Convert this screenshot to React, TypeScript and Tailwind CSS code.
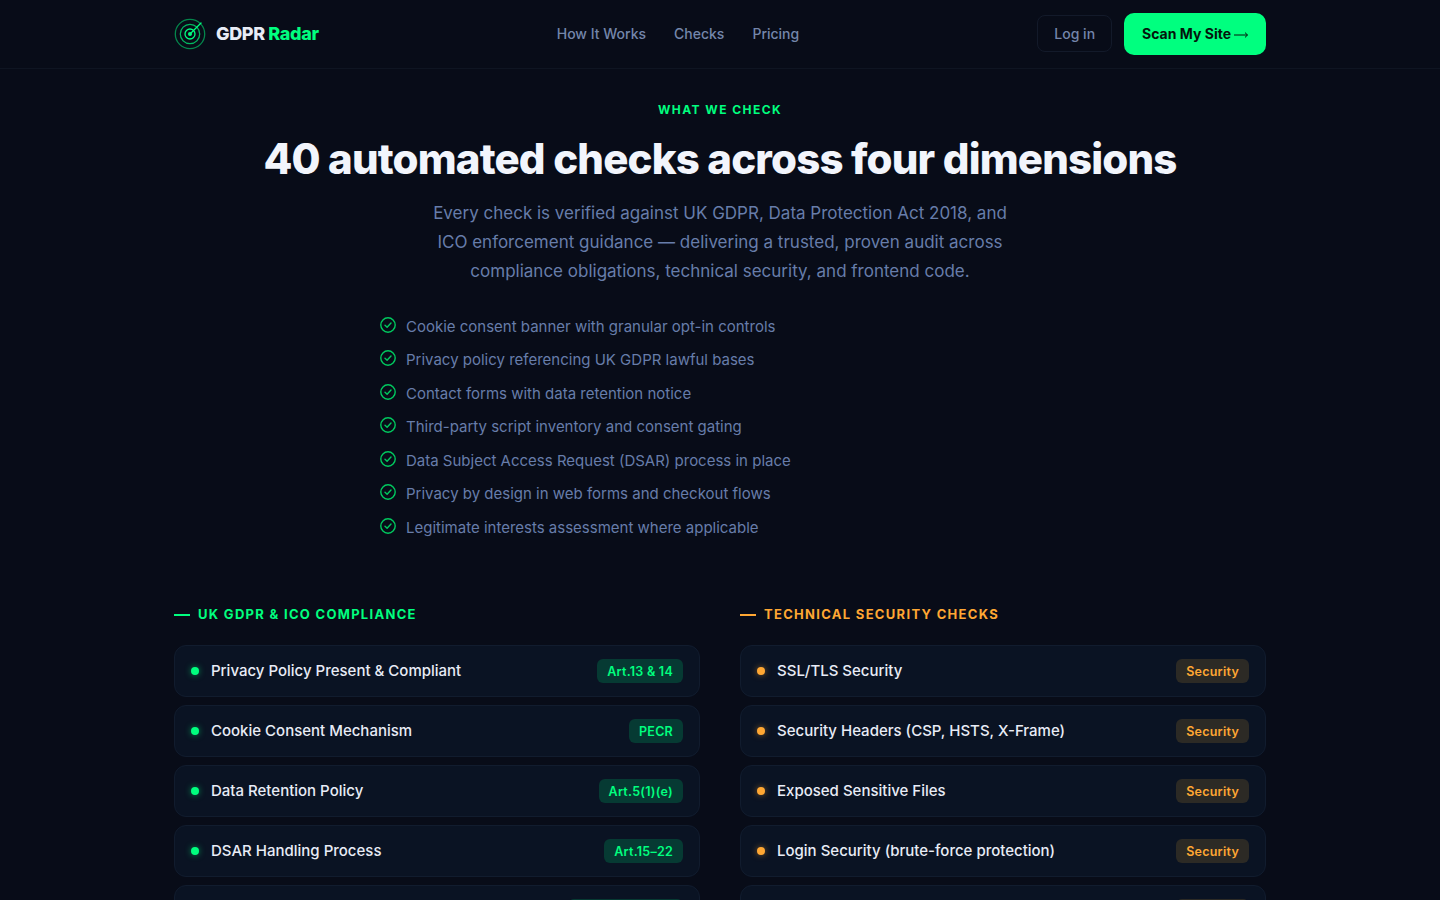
import React from "react";

type Check = { name: string; tag: string };

const bullets = [
  "Cookie consent banner with granular opt-in controls",
  "Privacy policy referencing UK GDPR lawful bases",
  "Contact forms with data retention notice",
  "Third-party script inventory and consent gating",
  "Data Subject Access Request (DSAR) process in place",
  "Privacy by design in web forms and checkout flows",
  "Legitimate interests assessment where applicable",
];

const gdprChecks: Check[] = [
  { name: "Privacy Policy Present & Compliant", tag: "Art.13 & 14" },
  { name: "Cookie Consent Mechanism", tag: "PECR" },
  { name: "Data Retention Policy", tag: "Art.5(1)(e)" },
  { name: "DSAR Handling Process", tag: "Art.15–22" },
  { name: "Breach Notification Process", tag: "Art.33 & Art.34" },
];

const securityChecks: Check[] = [
  { name: "SSL/TLS Security", tag: "Security" },
  { name: "Security Headers (CSP, HSTS, X-Frame)", tag: "Security" },
  { name: "Exposed Sensitive Files", tag: "Security" },
  { name: "Login Security (brute-force protection)", tag: "Security" },
  { name: "Mixed Content", tag: "Security" },
];

function Logo() {
  return (
    <svg width="32" height="32" viewBox="0 0 32 32" fill="none" className="shrink-0">
      <circle cx="16" cy="16" r="14.7" stroke="#00ff7f" strokeOpacity="0.5" strokeWidth="1.3" />
      <circle cx="16" cy="16" r="9.7" stroke="#00ff7f" strokeOpacity="0.7" strokeWidth="1.3" />
      <circle cx="16" cy="16" r="5" stroke="#00ff7f" strokeWidth="1.3" />
      <circle cx="16" cy="16" r="2" fill="#00ff7f" />
      <path d="M16 16L27 5" stroke="#00ff7f" strokeWidth="1.3" strokeLinecap="round" />
    </svg>
  );
}

function CheckIcon() {
  return (
    <svg width="16" height="16" viewBox="0 0 16 16" fill="none" className="mb-[5px] shrink-0">
      <circle cx="8" cy="8" r="7.2" stroke="#00c95f" strokeWidth="1.4" />
      <path d="M5 8.2L7.1 10.2L11 6" stroke="#00c95f" strokeWidth="1.4" strokeLinecap="round" strokeLinejoin="round" />
    </svg>
  );
}

function ArrowIcon() {
  return (
    <svg width="14" height="8" viewBox="0 0 14 8" fill="none" className="mt-[2px] ml-[3px]">
      <path d="M0 4H13.5M11 1.6L13.5 4L11 6.4" stroke="#04140c" strokeWidth="1" />
    </svg>
  );
}

function CheckRow({ check, tone }: { check: Check; tone: "green" | "orange" }) {
  const green = tone === "green";
  return (
    <div className="flex h-[52px] items-center rounded-xl border border-[#111c2e] bg-[#0a1323] pl-4 pr-4">
      <span className={green ? "mr-3 h-2 w-2 shrink-0 rounded-full bg-[#00ff7f] shadow-[0_0_6px_rgba(0,255,127,0.5)]" : "mr-3 h-2 w-2 shrink-0 rounded-full bg-[#ffa733] shadow-[0_0_6px_rgba(255,167,51,0.5)]"} />
      <span className="flex-1 pt-[2px] text-[15px] font-medium text-[#e8ecf6]">{check.name}</span>
      <span className={green ? "flex h-6 items-center rounded-md bg-[#063a33] px-2.5 pt-[3px] text-[12.5px] font-semibold tracking-[0.02em] text-[#00ff7f]" : "flex h-6 items-center rounded-md bg-[#2c2a25] px-2.5 pt-[3px] text-[12.5px] font-semibold tracking-[0.02em] text-[#ffa733]"}>
        {check.tag}
      </span>
    </div>
  );
}

function CheckColumn({ title, tone, checks }: { title: string; tone: "green" | "orange"; checks: Check[] }) {
  const green = tone === "green";
  return (
    <div>
      <div className={green ? "mb-[21px] flex h-[18px] items-center gap-2 text-[13px] font-bold tracking-[0.1em] text-[#00ff7f]" : "mb-[21px] flex h-[18px] items-center gap-2 text-[13px] font-bold tracking-[0.1em] text-[#ffa733]"}>
        <span className={green ? "h-0.5 w-4 bg-[#00ff7f]" : "h-0.5 w-4 bg-[#ffa733]"} />
        {title}
      </div>
      <div className="flex flex-col gap-2">
        {checks.map((c) => (
          <CheckRow key={c.name} check={c} tone={tone} />
        ))}
      </div>
    </div>
  );
}

export default function App() {
  return (
    <div className="h-screen overflow-hidden bg-[#080c18] font-['Inter',sans-serif]">
      <nav className="h-[69px] border-b border-[#0f1522]">
        <div className="mx-auto flex h-full w-[1092px] items-center justify-between">
          <div className="flex items-center gap-2.5">
            <Logo />
            <span className="text-lg font-extrabold tracking-[-0.02em] text-[#e8ecf6]">
              GDPR <span className="text-[#00ff7f]">Radar</span>
            </span>
          </div>
          <div className="flex items-center gap-7 text-sm font-medium text-[#7486ab]">
            <span>How It Works</span>
            <span>Checks</span>
            <span>Pricing</span>
          </div>
          <div className="flex items-center gap-3">
            <span className="mb-[2px] flex h-[37px] items-center rounded-lg border border-[#131a2a] px-4 pt-[2px] text-sm font-medium text-[#7486ab]">Log in</span>
            <span className="flex h-[42px] items-center rounded-[10px] bg-[#00ff7f] pl-[18px] pr-[18px] text-sm font-bold text-[#04140c]">
              Scan My Site
              <ArrowIcon />
            </span>
          </div>
        </div>
      </nav>

      <main className="mx-auto w-[1092px] pt-[33px]">
        <p className="text-center text-xs font-bold leading-[16px] tracking-[0.12em] text-[#00ff7f]">WHAT WE CHECK</p>
        <h1 className="mt-[15px] text-center text-[42px] font-extrabold leading-[52px] tracking-[-0.02em] text-[#f2f5fc]">
          40 automated checks across four dimensions
        </h1>
        <p className="mx-auto mt-[14px] w-[580px] text-center text-[17px] leading-[29px] text-[#677daa]">
          Every check is verified against UK GDPR, Data Protection Act 2018, and ICO enforcement guidance — delivering a trusted, proven audit across compliance obligations, technical security, and frontend code.
        </p>

        <ul className="mx-auto mt-[30.75px] flex w-[680px] flex-col gap-[13px]">
          {bullets.map((b) => (
            <li key={b} className="flex h-[20.5px] items-center gap-2.5 text-[15px] text-[#677daa]">
              <CheckIcon />
              {b}
            </li>
          ))}
        </ul>

        <div className="mt-[67.25px] grid grid-cols-2 gap-10">
          <CheckColumn title="UK GDPR & ICO COMPLIANCE" tone="green" checks={gdprChecks} />
          <CheckColumn title="TECHNICAL SECURITY CHECKS" tone="orange" checks={securityChecks} />
        </div>
      </main>
    </div>
  );
}
